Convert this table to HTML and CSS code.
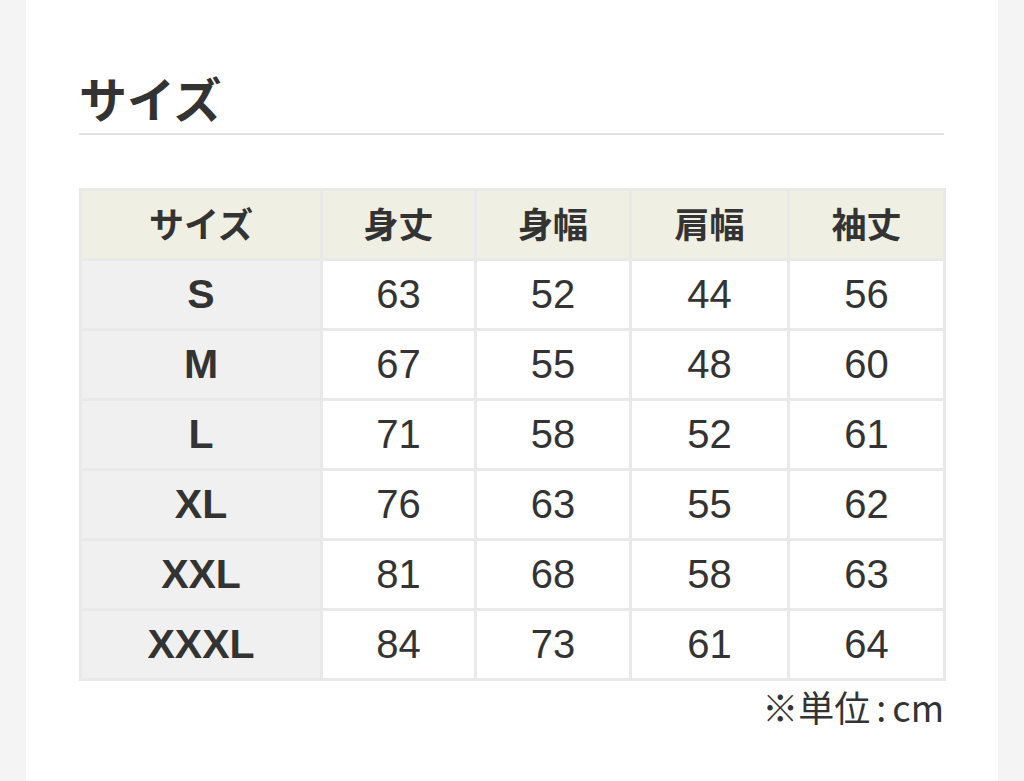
FILE: index.html
```html
<!DOCTYPE html>
<html lang="ja">
<head>
<meta charset="utf-8">
<title>サイズ</title>
<link rel="stylesheet" href="styles.css">
</head>
<body>
<div class="card">
  <h2 class="title">サイズ</h2>
  <table class="size-table">
    <colgroup>
      <col class="c1"><col class="c2"><col class="c3"><col class="c4"><col class="c5">
    </colgroup>
    <thead>
      <tr><th>サイズ</th><th>身丈</th><th>身幅</th><th>肩幅</th><th>袖丈</th></tr>
    </thead>
    <tbody>
      <tr><th>S</th><td>63</td><td>52</td><td>44</td><td>56</td></tr>
      <tr><th>M</th><td>67</td><td>55</td><td>48</td><td>60</td></tr>
      <tr><th>L</th><td>71</td><td>58</td><td>52</td><td>61</td></tr>
      <tr><th>XL</th><td>76</td><td>63</td><td>55</td><td>62</td></tr>
      <tr><th>XXL</th><td>81</td><td>68</td><td>58</td><td>63</td></tr>
      <tr><th>XXXL</th><td>84</td><td>73</td><td>61</td><td>64</td></tr>
    </tbody>
  </table>
  <p class="note">※単位<span class="colon">:</span>cm</p>
</div>
</body>
</html>
```

FILE: styles.css
```css
html, body {
  margin: 0;
  padding: 0;
  background: #f4f4f4;
  color: #333;
  font-family: "Liberation Sans", "Noto Sans CJK JP", sans-serif;
}
.card {
  background: #fff;
  margin: 0 26px;
  padding: 68px 54px 0 53px;
  min-height: 781px;
  box-sizing: border-box;
}
.title {
  margin: 0;
  font-family: "Noto Sans CJK JP", sans-serif;
  font-size: 48px;
  font-weight: 700;
  line-height: 58px;
  padding-bottom: 7px;
  border-bottom: 2px solid #e2e2e2;
}
.size-table {
  margin-top: 53px;
  width: 864px;
  border-collapse: collapse;
  table-layout: fixed;
  border: 3px solid #e9e9e9;
}
.c1 { width: 241px; }
.c2 { width: 154px; }
.c3 { width: 155px; }
.c4 { width: 158px; }
.c5 { width: 156px; }
.size-table th,
.size-table td {
  border: 3px solid #e9e9e9;
  height: 67px;
  padding: 0;
  text-align: center;
  vertical-align: middle;
}
.size-table thead th {
  background: #efefe4;
  font-family: "Noto Sans CJK JP", sans-serif;
  font-size: 35px;
  font-weight: 700;
  height: 63px;
  padding-bottom: 4px;
}
.size-table tbody th {
  background: #f0f0f0;
  font-size: 41px;
  font-weight: 700;
}
.size-table td {
  font-size: 40px;
  font-weight: 400;
}
.note {
  margin: 4px 0 0;
  text-align: right;
  font-family: "Noto Sans CJK JP", sans-serif;
  font-size: 36px;
  line-height: 42px;
}
.colon {
  margin: 0 6px;
}
```
